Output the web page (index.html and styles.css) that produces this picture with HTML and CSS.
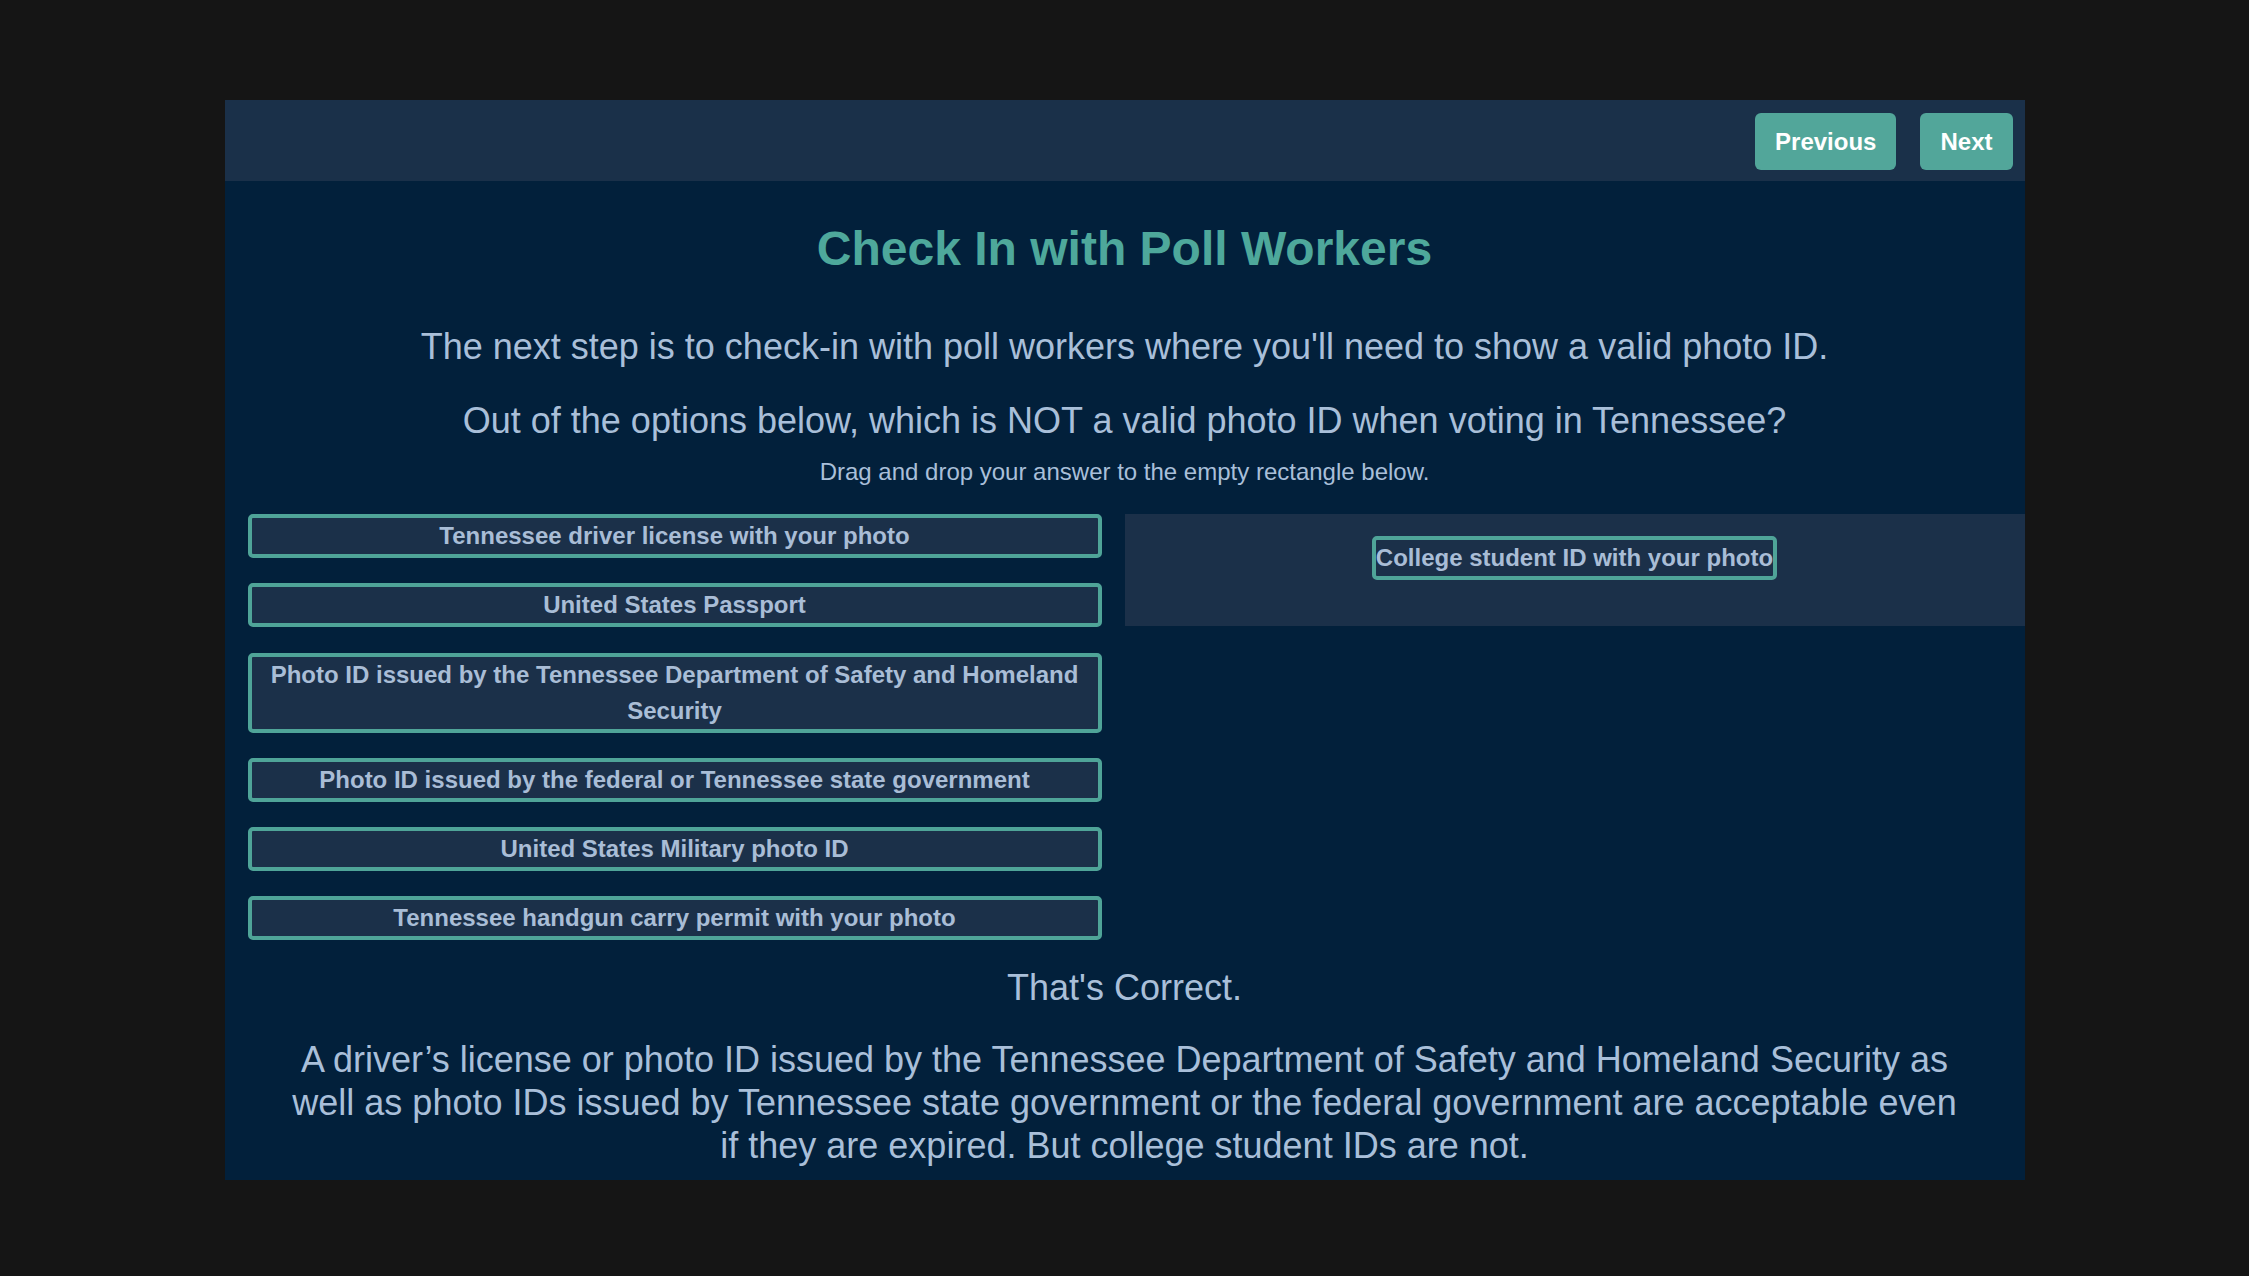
FILE: index.html
```html
<!DOCTYPE html>
<html lang="en">
<head>
<meta charset="utf-8">
<title>Check In with Poll Workers</title>
<link rel="stylesheet" href="styles.css">
</head>
<body>
<div class="page">
  <main class="card">
    <header class="topbar">
      <button class="btn">Previous</button>
      <button class="btn">Next</button>
    </header>
    <h1 class="title">Check In with Poll Workers</h1>
    <p class="lead">The next step is to check-in with poll workers where you'll need to show a valid photo ID.</p>
    <p class="lead question">Out of the options below, which is NOT a valid photo ID when voting in Tennessee?</p>
    <p class="hint">Drag and drop your answer to the empty rectangle below.</p>
    <section class="dnd">
      <div class="options">
        <div class="opt">Tennessee driver license with your photo</div>
        <div class="opt">United States Passport</div>
        <div class="opt">Photo ID issued by the Tennessee Department of Safety and Homeland Security</div>
        <div class="opt">Photo ID issued by the federal or Tennessee state government</div>
        <div class="opt">United States Military photo ID</div>
        <div class="opt">Tennessee handgun carry permit with your photo</div>
      </div>
      <div class="drop">
        <div class="opt dropped">College student ID with your photo</div>
      </div>
    </section>
    <p class="result">That's Correct.</p>
    <p class="explain">A driver’s license or photo ID issued by the Tennessee Department of Safety and Homeland Security as well as photo IDs issued by Tennessee state government or the federal government are acceptable even if they are expired. But college student IDs are not.</p>
  </main>
</div>
</body>
</html>
```
FILE: styles.css
```css
* { box-sizing: border-box; }
html, body {
  margin: 0;
  padding: 0;
  background: #151515;
  font-family: "Liberation Sans", Arial, sans-serif;
}
.page {
  padding-top: 100px;
  display: flex;
  justify-content: center;
  min-height: 1276px;
}
.card {
  width: 1800px;
  height: 1080px;
  background: #02203b;
  color: #a9bfd9;
  display: flex;
  flex-direction: column;
}
.topbar {
  background: #1a3049;
  height: 81px;
  padding: 13px 12px 11px;
  display: flex;
  justify-content: flex-end;
  align-items: flex-start;
  gap: 24px;
}
.btn {
  font-family: "Liberation Sans", Arial, sans-serif;
  font-size: 24px;
  font-weight: bold;
  line-height: 27px;
  color: #ffffff;
  background: #52a69a;
  border: none;
  border-radius: 6px;
  padding: 15px 20px;
  margin: 0;
}
.title {
  margin: 40px 0 0;
  font-size: 48px;
  line-height: 55px;
  font-weight: bold;
  color: #4ea89b;
  text-align: center;
}
.lead {
  margin: 50px 0 0;
  font-size: 36px;
  line-height: 41px;
  text-align: center;
}
.question { margin-top: 33px; }
.hint {
  margin: 17px 0 0;
  font-size: 24px;
  line-height: 28px;
  text-align: center;
}
.dnd {
  margin-top: 28px;
  display: grid;
  grid-template-columns: 1fr 1fr;
  align-items: start;
}
.options {
  padding: 0 23px;
}
.opt {
  background: #1b3049;
  border: 4px solid #4fa498;
  border-radius: 5px;
  font-size: 24px;
  font-weight: bold;
  line-height: 36px;
  text-align: center;
  color: #a9bdd6;
  margin-bottom: 25.3px;
}
.drop {
  background: #1b3049;
  padding: 22px 0 21px;
  text-align: center;
}
.dropped {
  display: inline-block;
  margin-bottom: 25px;
  vertical-align: top;
}
.result {
  margin: 0;
  font-size: 36px;
  line-height: 43.2px;
  text-align: center;
}
.explain {
  margin: 29px 0 0;
  padding: 0 60px;
  font-size: 36px;
  line-height: 43.2px;
  text-align: center;
}
```
